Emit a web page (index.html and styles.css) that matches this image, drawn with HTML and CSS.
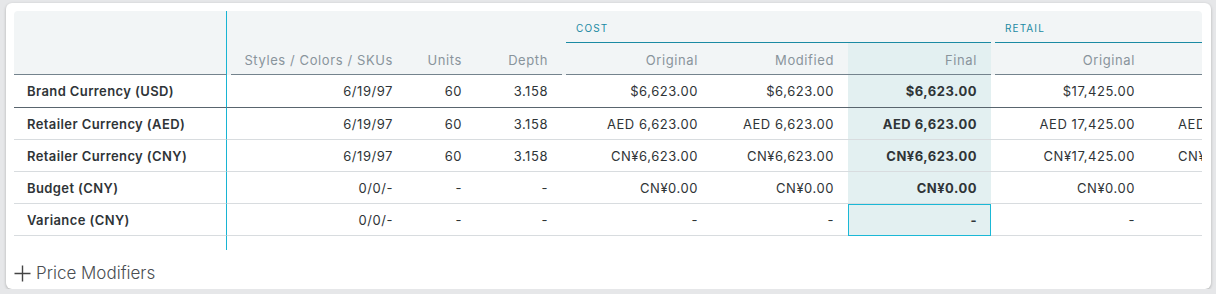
FILE: index.html
```html
<!DOCTYPE html>
<html>
<head>
<meta charset="utf-8">
<link rel="stylesheet" href="styles.css">
</head>
<body>
<div class="card">
  <div class="table-wrap">
    <table class="grid">
      <colgroup>
        <col class="c-label"><col class="c-gap"><col class="c-styles"><col class="c-units"><col class="c-depth"><col class="c-gap"><col class="c-orig"><col class="c-mod"><col class="c-final"><col class="c-gap"><col class="c-rorig"><col class="c-next">
      </colgroup>
      <thead>
        <tr class="h-group">
          <th class="h-label" rowspan="2"></th>
          <th class="gap" rowspan="2"></th>
          <th></th><th></th><th></th>
          <th class="gap"></th>
          <th class="group" colspan="3">COST</th>
          <th class="gap"></th>
          <th class="group" colspan="2">RETAIL</th>
        </tr>
        <tr class="h-cols">
          <th class="col">Styles / Colors / SKUs</th>
          <th class="col">Units</th>
          <th class="col">Depth</th>
          <th class="gap"></th>
          <th class="col">Original</th>
          <th class="col">Modified</th>
          <th class="col final">Final</th>
          <th class="gap"></th>
          <th class="col">Original</th>
          <th class="col"></th>
        </tr>
      </thead>
      <tbody>
        <tr class="first">
          <td class="label">Brand Currency (USD)</td><td class="gap"></td>
          <td>6/19/97</td><td>60</td><td>3.158</td><td class="gap"></td>
          <td>$6,623.00</td><td>$6,623.00</td><td class="final">$6,623.00</td><td class="gap"></td>
          <td>$17,425.00</td><td></td>
        </tr>
        <tr>
          <td class="label">Retailer Currency (AED)</td><td class="gap"></td>
          <td>6/19/97</td><td>60</td><td>3.158</td><td class="gap"></td>
          <td>AED 6,623.00</td><td>AED 6,623.00</td><td class="final">AED 6,623.00</td><td class="gap"></td>
          <td>AED 17,425.00</td><td class="left">AED 17,425.00</td>
        </tr>
        <tr>
          <td class="label">Retailer Currency (CNY)</td><td class="gap"></td>
          <td>6/19/97</td><td>60</td><td>3.158</td><td class="gap"></td>
          <td>CN¥6,623.00</td><td>CN¥6,623.00</td><td class="final">CN¥6,623.00</td><td class="gap"></td>
          <td>CN¥17,425.00</td><td class="left">CN¥17,425.00</td>
        </tr>
        <tr>
          <td class="label">Budget (CNY)</td><td class="gap"></td>
          <td>0/0/-</td><td>-</td><td>-</td><td class="gap"></td>
          <td>CN¥0.00</td><td>CN¥0.00</td><td class="final">CN¥0.00</td><td class="gap"></td>
          <td>CN¥0.00</td><td></td>
        </tr>
        <tr>
          <td class="label">Variance (CNY)</td><td class="gap"></td>
          <td>0/0/-</td><td>-</td><td>-</td><td class="gap"></td>
          <td>-</td><td>-</td><td class="final focus">-</td><td class="gap"></td>
          <td>-</td><td></td>
        </tr>
        <tr class="spacer">
          <td class="label"></td><td colspan="11"></td>
        </tr>
      </tbody>
    </table>
  </div>
  <button class="add-btn">
    <svg class="plus" width="17" height="17" viewBox="0 0 17 17"><path d="M8.5 0.5v16M0.5 8.5h16" stroke="#444" stroke-width="1.4" fill="none"/></svg>
    <span>Price Modifiers</span>
  </button>
</div>
</body>
</html>
```

FILE: styles.css
```css
html, body {
  margin: 0;
  padding: 0;
  background: #e6e7e9;
  font-family: "Inter", "Liberation Sans", sans-serif;
}
.card {
  margin: 3px 5px 0 6px;
  height: 286px;
  box-sizing: border-box;
  background: #fff;
  border-radius: 6px;
  box-shadow: 0 1px 3px rgba(0,0,0,0.25);
  padding: 8px 9px 0 8px;
}
.table-wrap {
  width: 1188px;
  overflow: hidden;
  border-radius: 4px 4px 0 0;
}
.grid {
  table-layout: fixed;
  border-collapse: separate;
  border-spacing: 0;
  width: 1286px;
  color: #2f3437;
  font-size: 13px;
  letter-spacing: 0.55px;
}
.c-label { width: 213px; }
.c-gap { width: 4px; }
.c-styles { width: 176px; }
.c-units { width: 69px; }
.c-depth { width: 86px; }
.c-orig { width: 146px; }
.c-mod { width: 136px; }
.c-final { width: 143px; }
.c-rorig { width: 154px; }
.c-next { width: 151px; }

th, td { padding: 0; box-sizing: border-box; white-space: nowrap; overflow: hidden; }
thead th { background: #f2f5f6; font-weight: 400; }
.h-label { border-right: 1px solid #18b4d3; border-bottom: 1px solid #74838d; }
.h-group th { height: 32px; vertical-align: middle; }
.h-group .group {
  text-align: left;
  padding-left: 10px;
  font-size: 10px;
  letter-spacing: 1.1px;
  color: #1b8aa3;
  border-bottom: 1px solid #1b8aa3;
  vertical-align: middle;
  padding-top: 2px;
}
.h-cols th { height: 32px; }
.h-cols .col {
  text-align: right;
  padding-right: 14px;
  color: #89949c;
  font-size: 13px;
  letter-spacing: 0.6px;
  border-bottom: 1px solid #74838d;
  padding-top: 2px;
}
.h-cols .final { background: #e3f0f1; }

tbody td {
  height: 32px;
  text-align: right;
  padding-right: 14px;
  border-bottom: 1px solid #d8dcdf;
}
tbody tr.first td { border-bottom-color: #59656e; height: 33px; }
tbody td.label {
  text-align: left;
  padding-left: 13px;
  padding-right: 0;
  font-weight: 600;
  letter-spacing: 0.4px;
  border-right: 1px solid #18b4d3;
}
tbody td.gap { padding: 0; }
tbody td.final { background: #e3f0f1; font-weight: 700; letter-spacing: 0.5px; }
tbody td.left { text-align: left; padding-left: 29px; padding-right: 0; }
tbody td.focus { outline: 1px solid #1ab8d6; outline-offset: -1px; }
tbody tr.spacer td { height: 14px; border-bottom: none; }

.add-btn {
  display: flex;
  align-items: center;
  gap: 5px;
  margin-top: 13px;
  padding: 0;
  border: none;
  background: none;
  font-family: "Inter", "Liberation Sans", sans-serif;
  font-size: 17px;
  font-weight: 300;
  color: #4a4e52;
  cursor: pointer;
}
```
